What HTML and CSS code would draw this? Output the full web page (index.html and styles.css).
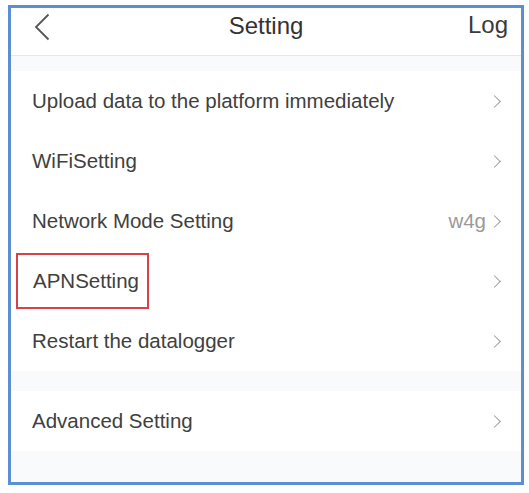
FILE: index.html
```html
<!DOCTYPE html>
<html>
<head>
<meta charset="utf-8">
<link rel="stylesheet" href="styles.css">
</head>
<body>
<div class="frame">
  <header class="topbar">
    <span class="back">
      <svg width="18" height="28" viewBox="0 0 18 28"><path d="M15.5 1.5 L3 14 L15.5 26.5" fill="none" stroke="#555" stroke-width="1.8"/></svg>
    </span>
    <span class="title">Setting</span>
    <span class="log">Log</span>
  </header>
  <div class="gap gap-top"></div>
  <ul class="list">
    <li class="row"><span class="label">Upload data to the platform immediately</span><span class="chev"></span></li>
    <li class="row"><span class="label">WiFiSetting</span><span class="chev"></span></li>
    <li class="row"><span class="label">Network Mode Setting</span><span class="value">w4g</span><span class="chev"></span></li>
    <li class="row"><span class="label boxed">APNSetting</span><span class="chev"></span></li>
    <li class="row"><span class="label">Restart the datalogger</span><span class="chev"></span></li>
  </ul>
  <div class="gap gap-mid"></div>
  <ul class="list">
    <li class="row"><span class="label">Advanced Setting</span><span class="chev"></span></li>
  </ul>
  <div class="gap gap-bottom"></div>
</div>
</body>
</html>
```
FILE: styles.css
```css
html, body {
  margin: 0;
  padding: 0;
  background: #ffffff;
}
body {
  font-family: "Liberation Sans", Arial, sans-serif;
  color: #3a3a3a;
}
.frame {
  box-sizing: border-box;
  margin: 5px 0 0 8px;
  width: 516px;
  height: 480px;
  border: 3px solid #5b8fd3;
  display: flex;
  flex-direction: column;
  background: #f9fafc;
  overflow: hidden;
}
.topbar {
  box-sizing: border-box;
  height: 48px;
  flex: none;
  background: #ffffff;
  border-bottom: 1px solid #e8e8e8;
  display: flex;
  align-items: center;
  position: relative;
  padding: 0 13px 13px 22px;
}
.back {
  display: flex;
  align-items: center;
  margin-top: 3px;
}
.title {
  position: absolute;
  left: 0;
  right: 0;
  top: 4px;
  text-align: center;
  font-size: 24px;
  color: #333;
  pointer-events: none;
}
.log {
  margin-left: auto;
  font-size: 24px;
  color: #3a3a3a;
}
.gap-top { height: 15px; flex: none; }
.gap-mid { height: 20px; flex: none; }
.gap-bottom { flex: 1; }
.list {
  list-style: none;
  margin: 0;
  padding: 0;
  background: #ffffff;
}
.row {
  height: 60px;
  display: flex;
  align-items: center;
  padding: 0 19px 0 21px;
  font-size: 20.5px;
}
.label {
  flex: 1;
  color: #404040;
}
.label.boxed {
  flex: none;
  margin-left: -16px;
  padding: 14px 8px 14px 15px;
  border: 2px solid #d8414a;
  margin-right: auto;
}
.value {
  color: #9a9a9a;
  margin-right: 4px;
}
.chev {
  width: 8px;
  height: 8px;
  border-top: 1.5px solid #9d9d9d;
  border-right: 1.5px solid #9d9d9d;
  transform: rotate(45deg);
  margin-right: 3px;
}
```
